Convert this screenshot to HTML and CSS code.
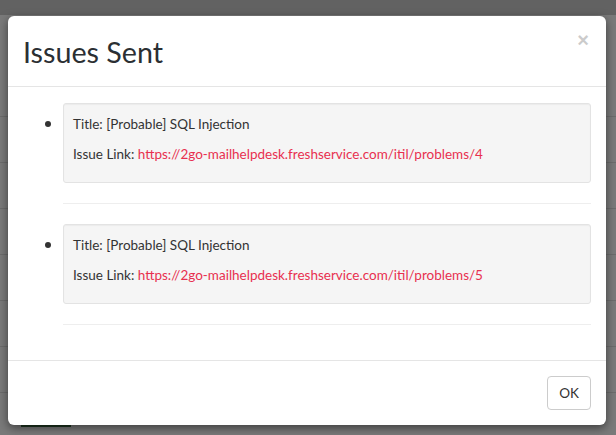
FILE: index.html
```html
<!DOCTYPE html>
<html>
<head>
<meta charset="utf-8">
<link rel="stylesheet" href="styles.css">
</head>
<body>
<div class="page">
  <div class="topbar"></div>
  <div class="rows">
    <div class="row"></div><div class="row"></div><div class="row"></div><div class="row"></div>
    <div class="row"></div><div class="row"></div><div class="row"></div>
  </div>
  <div class="green-btn"></div>
</div>
<div class="modal">
  <div class="modal-header">
    <h4 class="modal-title">Issues Sent</h4>
    <button class="close" type="button">×</button>
  </div>
  <div class="modal-body">
    <ul class="issues">
      <li>
        <div class="well">
          <p>Title: [Probable] SQL Injection</p>
          <p>Issue Link: <a href="#">https://2go-mailhelpdesk.freshservice.com/itil/problems/4</a></p>
        </div>
        <hr>
      </li>
      <li>
        <div class="well">
          <p>Title: [Probable] SQL Injection</p>
          <p>Issue Link: <a href="#">https://2go-mailhelpdesk.freshservice.com/itil/problems/5</a></p>
        </div>
        <hr>
      </li>
    </ul>
  </div>
  <div class="modal-footer">
    <button class="btn" type="button">OK</button>
  </div>
</div>
</body>
</html>
```
FILE: styles.css
```css
html, body {
  margin: 0;
  padding: 0;
}
body {
  width: 616px;
  height: 435px;
  overflow: hidden;
  background: #7a7a7a;
  font-family: "Source Sans Pro", Lato, "Liberation Sans", sans-serif;
  font-size: 13.5px;
  color: #333;
}
.page {
  position: relative;
  height: 435px;
}
.topbar {
  height: 15px;
  background: #626262;
}
.rows {
  padding-top: 101px;
}
.row {
  height: 45px;
  border-top: 1px solid #6c6c6c;
}
.green-btn {
  position: absolute;
  left: 21px;
  top: 424px;
  width: 50px;
  height: 3px;
  background: #1e3520;
}
.modal {
  position: absolute;
  left: 8px;
  top: 16px;
  width: 598px;
  height: 409px;
  background: #fff;
  border-radius: 6px;
  box-shadow: 0 3px 10px rgba(0, 0, 0, 0.5);
  display: flex;
  flex-direction: column;
}
.modal-header {
  height: 73px;
  box-sizing: border-box;
  border-bottom: 1px solid #e5e5e5;
  padding: 0 15px;
  display: flex;
  align-items: center;
  justify-content: space-between;
  position: relative;
}
.modal-title {
  margin: 0;
  font-size: 28.7px;
  font-weight: 400;
  line-height: 36px;
  color: #2b2f33;
  padding-top: 2px;
}
.close {
  position: absolute;
  right: 17px;
  top: 14px;
  border: 0;
  background: none;
  padding: 0;
  font-size: 20px;
  font-weight: bold;
  color: #000;
  opacity: 0.2;
  line-height: 20px;
  font-family: "Liberation Sans", sans-serif;
}
.modal-body {
  flex: 1;
  padding: 16px 15px 15px;
}
.issues {
  margin: 0;
  padding-left: 40px;
}
.issues li {
  list-style: disc;
}
.issues li::marker {
  font-size: 17px;
}
.well {
  background: #f5f5f5;
  border: 1px solid #e3e3e3;
  border-radius: 3px;
  padding: 10px 9px 8px;
  box-shadow: inset 0 1px 1px rgba(0, 0, 0, 0.04);
}
.well p {
  margin: 0 0 10px;
  line-height: 20px;
}
.well a {
  color: #e8304f;
  text-decoration: none;
}
hr {
  border: 0;
  border-top: 1px solid #eee;
  margin: 20px 0;
  height: 0;
}
.modal-footer {
  border-top: 1px solid #e5e5e5;
  padding: 15px;
  display: flex;
  justify-content: flex-end;
}
.btn {
  font-family: inherit;
  font-size: 13.5px;
  color: #333;
  background: #fff;
  border: 1px solid #ccc;
  border-radius: 4px;
  height: 34px;
  padding: 0 11px;
  line-height: 20px;
}
```
